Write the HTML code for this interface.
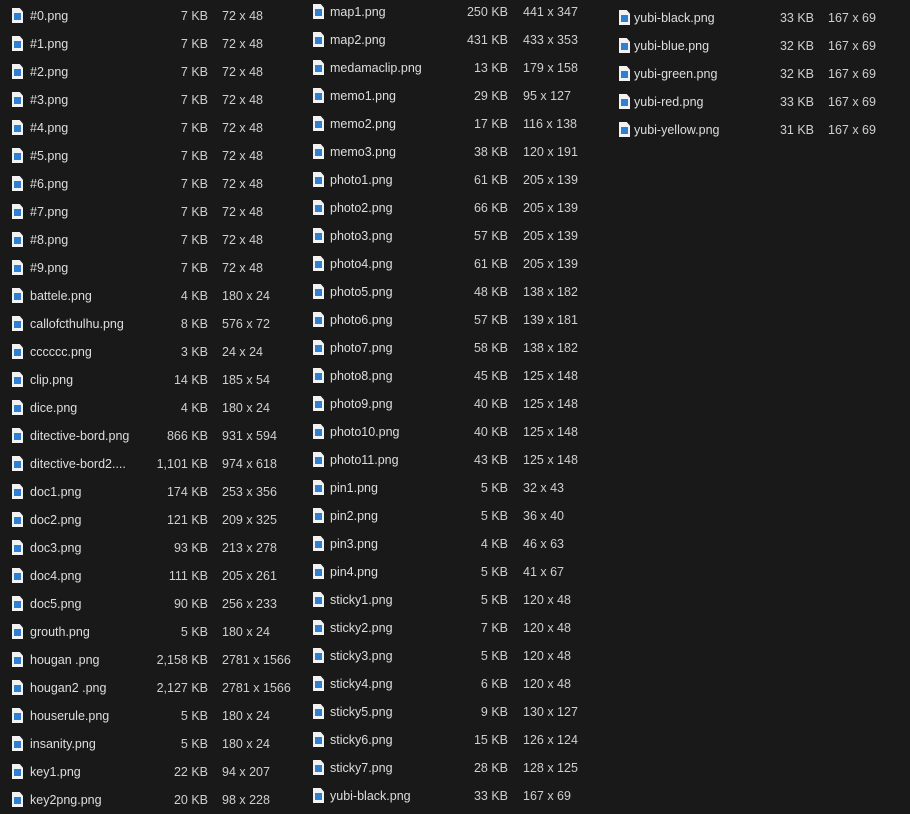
<!DOCTYPE html>
<html><head><meta charset="utf-8"><style>
body{margin:0;width:910px;height:814px;background:#191919;overflow:hidden;font-family:"Segoe UI","Liberation Sans",sans-serif;font-size:12.5px;color:#dedede;position:relative}
.r{position:absolute;height:18px;line-height:18px;white-space:nowrap}
.i{position:absolute;top:1px;left:0;width:11px;height:15px;background:#f2f2f2;clip-path:polygon(0 0,70% 0,100% 25%,100% 100%,0 100%)}
.i:after{content:"";position:absolute;left:2px;top:5px;width:7px;height:7px;background:#2f7fd3}
.n{position:absolute;top:0}
.s{position:absolute;top:0;text-align:right;width:80px;color:#cfcfcf}
.d{position:absolute;top:0;color:#cfcfcf}
.c1 .i{left:12px}.c1 .n{left:30px}.c1 .s{left:128px}.c1 .d{left:222px}
.c2 .i{left:313px}.c2 .n{left:330px}.c2 .s{left:428px}.c2 .d{left:523px}
.c3 .i{left:619px}.c3 .n{left:634px}.c3 .s{left:734px}.c3 .d{left:828px}
</style></head><body>
<div class="c1">
<div class="r" style="top:7px"><span class="i"></span><span class="n">#0.png</span><span class="s">7 KB</span><span class="d">72 x 48</span></div>
<div class="r" style="top:35px"><span class="i"></span><span class="n">#1.png</span><span class="s">7 KB</span><span class="d">72 x 48</span></div>
<div class="r" style="top:63px"><span class="i"></span><span class="n">#2.png</span><span class="s">7 KB</span><span class="d">72 x 48</span></div>
<div class="r" style="top:91px"><span class="i"></span><span class="n">#3.png</span><span class="s">7 KB</span><span class="d">72 x 48</span></div>
<div class="r" style="top:119px"><span class="i"></span><span class="n">#4.png</span><span class="s">7 KB</span><span class="d">72 x 48</span></div>
<div class="r" style="top:147px"><span class="i"></span><span class="n">#5.png</span><span class="s">7 KB</span><span class="d">72 x 48</span></div>
<div class="r" style="top:175px"><span class="i"></span><span class="n">#6.png</span><span class="s">7 KB</span><span class="d">72 x 48</span></div>
<div class="r" style="top:203px"><span class="i"></span><span class="n">#7.png</span><span class="s">7 KB</span><span class="d">72 x 48</span></div>
<div class="r" style="top:231px"><span class="i"></span><span class="n">#8.png</span><span class="s">7 KB</span><span class="d">72 x 48</span></div>
<div class="r" style="top:259px"><span class="i"></span><span class="n">#9.png</span><span class="s">7 KB</span><span class="d">72 x 48</span></div>
<div class="r" style="top:287px"><span class="i"></span><span class="n">battele.png</span><span class="s">4 KB</span><span class="d">180 x 24</span></div>
<div class="r" style="top:315px"><span class="i"></span><span class="n">callofcthulhu.png</span><span class="s">8 KB</span><span class="d">576 x 72</span></div>
<div class="r" style="top:343px"><span class="i"></span><span class="n">cccccc.png</span><span class="s">3 KB</span><span class="d">24 x 24</span></div>
<div class="r" style="top:371px"><span class="i"></span><span class="n">clip.png</span><span class="s">14 KB</span><span class="d">185 x 54</span></div>
<div class="r" style="top:399px"><span class="i"></span><span class="n">dice.png</span><span class="s">4 KB</span><span class="d">180 x 24</span></div>
<div class="r" style="top:427px"><span class="i"></span><span class="n">ditective-bord.png</span><span class="s">866 KB</span><span class="d">931 x 594</span></div>
<div class="r" style="top:455px"><span class="i"></span><span class="n">ditective-bord2....</span><span class="s">1,101 KB</span><span class="d">974 x 618</span></div>
<div class="r" style="top:483px"><span class="i"></span><span class="n">doc1.png</span><span class="s">174 KB</span><span class="d">253 x 356</span></div>
<div class="r" style="top:511px"><span class="i"></span><span class="n">doc2.png</span><span class="s">121 KB</span><span class="d">209 x 325</span></div>
<div class="r" style="top:539px"><span class="i"></span><span class="n">doc3.png</span><span class="s">93 KB</span><span class="d">213 x 278</span></div>
<div class="r" style="top:567px"><span class="i"></span><span class="n">doc4.png</span><span class="s">111 KB</span><span class="d">205 x 261</span></div>
<div class="r" style="top:595px"><span class="i"></span><span class="n">doc5.png</span><span class="s">90 KB</span><span class="d">256 x 233</span></div>
<div class="r" style="top:623px"><span class="i"></span><span class="n">grouth.png</span><span class="s">5 KB</span><span class="d">180 x 24</span></div>
<div class="r" style="top:651px"><span class="i"></span><span class="n">hougan .png</span><span class="s">2,158 KB</span><span class="d">2781 x 1566</span></div>
<div class="r" style="top:679px"><span class="i"></span><span class="n">hougan2 .png</span><span class="s">2,127 KB</span><span class="d">2781 x 1566</span></div>
<div class="r" style="top:707px"><span class="i"></span><span class="n">houserule.png</span><span class="s">5 KB</span><span class="d">180 x 24</span></div>
<div class="r" style="top:735px"><span class="i"></span><span class="n">insanity.png</span><span class="s">5 KB</span><span class="d">180 x 24</span></div>
<div class="r" style="top:763px"><span class="i"></span><span class="n">key1.png</span><span class="s">22 KB</span><span class="d">94 x 207</span></div>
<div class="r" style="top:791px"><span class="i"></span><span class="n">key2png.png</span><span class="s">20 KB</span><span class="d">98 x 228</span></div>
</div>
<div class="c2">
<div class="r" style="top:3px"><span class="i"></span><span class="n">map1.png</span><span class="s">250 KB</span><span class="d">441 x 347</span></div>
<div class="r" style="top:31px"><span class="i"></span><span class="n">map2.png</span><span class="s">431 KB</span><span class="d">433 x 353</span></div>
<div class="r" style="top:59px"><span class="i"></span><span class="n">medamaclip.png</span><span class="s">13 KB</span><span class="d">179 x 158</span></div>
<div class="r" style="top:87px"><span class="i"></span><span class="n">memo1.png</span><span class="s">29 KB</span><span class="d">95 x 127</span></div>
<div class="r" style="top:115px"><span class="i"></span><span class="n">memo2.png</span><span class="s">17 KB</span><span class="d">116 x 138</span></div>
<div class="r" style="top:143px"><span class="i"></span><span class="n">memo3.png</span><span class="s">38 KB</span><span class="d">120 x 191</span></div>
<div class="r" style="top:171px"><span class="i"></span><span class="n">photo1.png</span><span class="s">61 KB</span><span class="d">205 x 139</span></div>
<div class="r" style="top:199px"><span class="i"></span><span class="n">photo2.png</span><span class="s">66 KB</span><span class="d">205 x 139</span></div>
<div class="r" style="top:227px"><span class="i"></span><span class="n">photo3.png</span><span class="s">57 KB</span><span class="d">205 x 139</span></div>
<div class="r" style="top:255px"><span class="i"></span><span class="n">photo4.png</span><span class="s">61 KB</span><span class="d">205 x 139</span></div>
<div class="r" style="top:283px"><span class="i"></span><span class="n">photo5.png</span><span class="s">48 KB</span><span class="d">138 x 182</span></div>
<div class="r" style="top:311px"><span class="i"></span><span class="n">photo6.png</span><span class="s">57 KB</span><span class="d">139 x 181</span></div>
<div class="r" style="top:339px"><span class="i"></span><span class="n">photo7.png</span><span class="s">58 KB</span><span class="d">138 x 182</span></div>
<div class="r" style="top:367px"><span class="i"></span><span class="n">photo8.png</span><span class="s">45 KB</span><span class="d">125 x 148</span></div>
<div class="r" style="top:395px"><span class="i"></span><span class="n">photo9.png</span><span class="s">40 KB</span><span class="d">125 x 148</span></div>
<div class="r" style="top:423px"><span class="i"></span><span class="n">photo10.png</span><span class="s">40 KB</span><span class="d">125 x 148</span></div>
<div class="r" style="top:451px"><span class="i"></span><span class="n">photo11.png</span><span class="s">43 KB</span><span class="d">125 x 148</span></div>
<div class="r" style="top:479px"><span class="i"></span><span class="n">pin1.png</span><span class="s">5 KB</span><span class="d">32 x 43</span></div>
<div class="r" style="top:507px"><span class="i"></span><span class="n">pin2.png</span><span class="s">5 KB</span><span class="d">36 x 40</span></div>
<div class="r" style="top:535px"><span class="i"></span><span class="n">pin3.png</span><span class="s">4 KB</span><span class="d">46 x 63</span></div>
<div class="r" style="top:563px"><span class="i"></span><span class="n">pin4.png</span><span class="s">5 KB</span><span class="d">41 x 67</span></div>
<div class="r" style="top:591px"><span class="i"></span><span class="n">sticky1.png</span><span class="s">5 KB</span><span class="d">120 x 48</span></div>
<div class="r" style="top:619px"><span class="i"></span><span class="n">sticky2.png</span><span class="s">7 KB</span><span class="d">120 x 48</span></div>
<div class="r" style="top:647px"><span class="i"></span><span class="n">sticky3.png</span><span class="s">5 KB</span><span class="d">120 x 48</span></div>
<div class="r" style="top:675px"><span class="i"></span><span class="n">sticky4.png</span><span class="s">6 KB</span><span class="d">120 x 48</span></div>
<div class="r" style="top:703px"><span class="i"></span><span class="n">sticky5.png</span><span class="s">9 KB</span><span class="d">130 x 127</span></div>
<div class="r" style="top:731px"><span class="i"></span><span class="n">sticky6.png</span><span class="s">15 KB</span><span class="d">126 x 124</span></div>
<div class="r" style="top:759px"><span class="i"></span><span class="n">sticky7.png</span><span class="s">28 KB</span><span class="d">128 x 125</span></div>
<div class="r" style="top:787px"><span class="i"></span><span class="n">yubi-black.png</span><span class="s">33 KB</span><span class="d">167 x 69</span></div>
</div>
<div class="c3">
<div class="r" style="top:9px"><span class="i"></span><span class="n">yubi-black.png</span><span class="s">33 KB</span><span class="d">167 x 69</span></div>
<div class="r" style="top:37px"><span class="i"></span><span class="n">yubi-blue.png</span><span class="s">32 KB</span><span class="d">167 x 69</span></div>
<div class="r" style="top:65px"><span class="i"></span><span class="n">yubi-green.png</span><span class="s">32 KB</span><span class="d">167 x 69</span></div>
<div class="r" style="top:93px"><span class="i"></span><span class="n">yubi-red.png</span><span class="s">33 KB</span><span class="d">167 x 69</span></div>
<div class="r" style="top:121px"><span class="i"></span><span class="n">yubi-yellow.png</span><span class="s">31 KB</span><span class="d">167 x 69</span></div>
</div>
</body></html>
